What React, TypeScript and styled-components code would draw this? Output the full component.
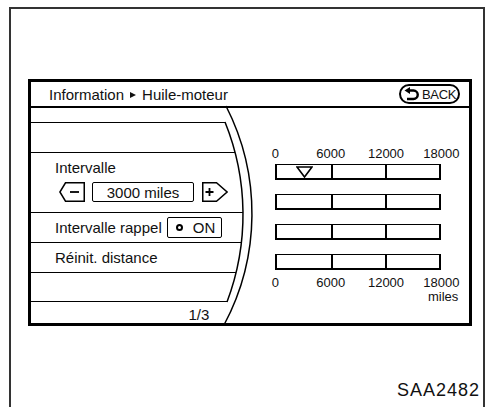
import styled, { createGlobalStyle } from "styled-components";

const GlobalStyle = createGlobalStyle`
  html, body {
    margin: 0;
    padding: 0;
    background: #fff;
  }
  body {
    font-family: "Liberation Sans", Arial, sans-serif;
    color: #111;
  }
`;

const Frame = styled.div`
  box-sizing: border-box;
  margin: 7px 0 0 9px;
  width: 476px;
  height: 402px;
  border: 2px solid #333;
  padding: 70px 3px 0 17px;
`;

const Screen = styled.div`
  box-sizing: border-box;
  width: 444px;
  height: 247px;
  border: 3px solid #000;
  display: flex;
  flex-direction: column;
`;

const Header = styled.div`
  box-sizing: border-box;
  height: 26px;
  border-bottom: 2px solid #000;
  display: flex;
  align-items: center;
  justify-content: space-between;
  padding: 0 9px 0 18px;
  font-size: 15px;
`;

const Crumb = styled.div`
  display: flex;
  align-items: center;
  gap: 4px;
`;

const CrumbArrow = styled.span`
  width: 0;
  height: 0;
  border-left: 6px solid #111;
  border-top: 3.5px solid transparent;
  border-bottom: 3.5px solid transparent;
  margin: 1px 2px 0 2px;
`;

const BackButton = styled.div`
  box-sizing: border-box;
  height: 20px;
  width: 61px;
  border: 2px solid #000;
  border-radius: 10px;
  display: flex;
  align-items: center;
  gap: 2px;
  padding-left: 3px;
  font-size: 13px;
  letter-spacing: -0.3px;
`;

const Body = styled.div`
  position: relative;
  flex: 1;
  display: flex;
`;

const LeftPanel = styled.div`
  width: 215px;
  display: flex;
  flex-direction: column;
  padding-top: 14px;
`;

const Row = styled.div<{ tall?: boolean; last?: boolean }>`
  box-sizing: border-box;
  height: ${(p) => (p.tall ? 60 : 30)}px;
  border-top: 1.5px solid #000;
  border-bottom: ${(p) => (p.last ? "1.5px solid #000" : "none")};
  padding-left: 24px;
  display: flex;
  flex-direction: column;
  justify-content: ${(p) => (p.tall ? "flex-start" : "center")};
  padding-top: ${(p) => (p.tall ? 6 : 0)}px;
  font-size: 15px;
`;

const InlineRow = styled.div`
  display: flex;
  align-items: center;
  gap: 5px;
`;

const Stepper = styled.div`
  display: flex;
  align-items: center;
  margin: 6px 0 0 4px;
  height: 20px;
`;

const ValueBox = styled.div`
  box-sizing: border-box;
  width: 102px;
  height: 20px;
  border: 1.5px solid #000;
  border-radius: 2px;
  margin: 0 8px 0 6px;
  display: flex;
  align-items: center;
  justify-content: center;
  font-size: 15px;
`;

const ToggleBox = styled.div`
  box-sizing: border-box;
  width: 55px;
  height: 21px;
  border: 1.5px solid #000;
  border-radius: 2px;
  display: flex;
  align-items: center;
  padding-left: 8px;
  gap: 10px;
  font-size: 15px;
`;

const Dot = styled.span`
  box-sizing: border-box;
  width: 7px;
  height: 7px;
  border: 2px solid #000;
  border-radius: 50%;
`;

const Footer = styled.div`
  flex: 1;
  display: flex;
  align-items: center;
  justify-content: flex-end;
  padding: 3px 35px 0 0;
  font-size: 15px;
`;

const RightPanel = styled.div`
  padding: 39px 0 0 31px;
  display: flex;
  flex-direction: column;
`;

const AxisLabels = styled.div`
  display: grid;
  grid-template-columns: repeat(4, 55.33px);
  margin-left: -27.67px;
  font-size: 13px;
  line-height: 14px;
  text-align: center;
`;

const Bars = styled.div`
  display: flex;
  flex-direction: column;
  gap: 14px;
  margin: 3px 0 6px;
`;

const Bar = styled.div`
  position: relative;
  box-sizing: border-box;
  width: 166px;
  height: 16px;
  border: 2px solid #000;
  border-top-width: 1px;
  display: grid;
  grid-template-columns: repeat(3, 1fr);
`;

const Segment = styled.div<{ first?: boolean }>`
  border-left: ${(p) => (p.first ? "none" : "2px solid #000")};
`;

const Marker = styled.svg`
  position: absolute;
  left: 19px;
  top: 1px;
`;

const Units = styled.div`
  width: 183px;
  text-align: right;
  font-size: 13px;
  line-height: 14px;
`;

const Curves = styled.svg`
  position: absolute;
  left: 0;
  top: 0;
  overflow: visible;
  pointer-events: none;
`;

const Caption = styled.div`
  margin-top: 53px;
  text-align: right;
  font-size: 18px;
  letter-spacing: 1px;
  line-height: 22px;
`;

const StepButton = ({ dir }: { dir: "left" | "right" }) =>
  dir === "left" ? (
    <svg width="27" height="20" viewBox="0 0 27 20">
      <path d="M6.5 0.75 H25.25 V19.25 H6.5 L0.9 10 Z" fill="none" stroke="#000" strokeWidth="1.5" />
      <path d="M11 10 H20" stroke="#000" strokeWidth="1.8" />
    </svg>
  ) : (
    <svg width="26" height="20" viewBox="0 0 26 20">
      <path d="M0.75 0.75 H14.5 L25.1 10 L14.5 19.25 H0.75 Z" fill="none" stroke="#000" strokeWidth="1.5" />
      <path d="M3.5 10 H11.5 M7.5 6 V14" stroke="#000" strokeWidth="1.8" />
    </svg>
  );

const BackIcon = () => (
  <svg width="16" height="14" viewBox="0 0 16 14">
    <path d="M5 3.5 H9.5 A4.25 4.25 0 0 1 9.5 12 H3" fill="none" stroke="#000" strokeWidth="2.4" />
    <path d="M0.5 3.5 L6 0 V7 Z" fill="#000" />
  </svg>
);

const ticks = ["0", "6000", "12000", "18000"];

export default function App() {
  return (
    <>
      <GlobalStyle />
      <Frame>
        <Screen>
          <Header>
            <Crumb>
              <span>Information</span>
              <CrumbArrow />
              <span>Huile-moteur</span>
            </Crumb>
            <BackButton>
              <BackIcon />
              <span>BACK</span>
            </BackButton>
          </Header>
          <Body>
            <LeftPanel>
              <Row />
              <Row tall>
                <span>Intervalle</span>
                <Stepper>
                  <StepButton dir="left" />
                  <ValueBox>3000 miles</ValueBox>
                  <StepButton dir="right" />
                </Stepper>
              </Row>
              <Row>
                <InlineRow>
                  <span>Intervalle rappel</span>
                  <ToggleBox>
                    <Dot />
                    <span>ON</span>
                  </ToggleBox>
                </InlineRow>
              </Row>
              <Row>Réinit. distance</Row>
              <Row last />
              <Footer>1/3</Footer>
            </LeftPanel>
            <RightPanel>
              <AxisLabels>
                {ticks.map((t) => (
                  <span key={t}>{t}</span>
                ))}
              </AxisLabels>
              <Bars>
                {[0, 1, 2, 3].map((i) => (
                  <Bar key={i}>
                    <Segment first />
                    <Segment />
                    <Segment />
                    {i === 0 && (
                      <Marker width="17" height="12" viewBox="0 0 17 12">
                        <path d="M1 1 H16 L8.5 11 Z" fill="#fff" stroke="#000" strokeWidth="1.6" />
                      </Marker>
                    )}
                  </Bar>
                ))}
              </Bars>
              <AxisLabels>
                {ticks.map((t) => (
                  <span key={t}>{t}</span>
                ))}
              </AxisLabels>
              <Units>miles</Units>
            </RightPanel>
            <Curves width="240" height="215">
              <path d="M194 14 A247 247 0 0 1 196 194 L218 194 L218 14 Z" fill="#fff" />
              <path d="M194 14 A247 247 0 0 1 196 194" fill="none" stroke="#000" strokeWidth="1.5" />
              <path d="M195 -2 A236 236 0 0 1 193 217" fill="none" stroke="#000" strokeWidth="1.5" />
            </Curves>
          </Body>
        </Screen>
        <Caption>SAA2482</Caption>
      </Frame>
    </>
  );
}
